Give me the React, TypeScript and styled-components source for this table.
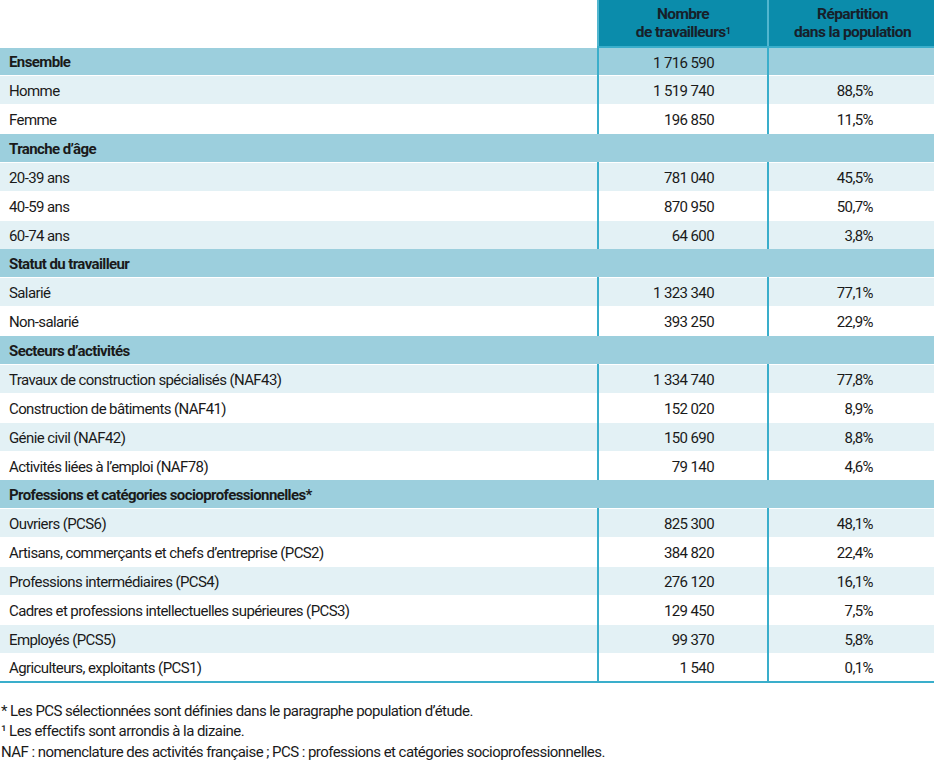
import React from "react";
import styled, { createGlobalStyle } from "styled-components";

const GlobalStyle = createGlobalStyle`
  html, body { margin: 0; padding: 0; background: #ffffff; }
  body {
    font-family: Roboto, "Liberation Sans", sans-serif;
    color: #1a1a1a;
  }
`;

const Page = styled.div`
  width: 934px;
  display: flex;
  flex-direction: column;
`;

const Table = styled.table`
  width: 934px;
  border-collapse: collapse;
  table-layout: fixed;
  font-size: 15px;
  letter-spacing: -0.6px;
`;

const HeadBlank = styled.th`
  width: 597px;
  padding: 0;
  background: #ffffff;
`;

const HeadCell = styled.th<{ $last?: boolean }>`
  width: ${(p) => (p.$last ? "167px" : "168px")};
  height: 46px;
  padding: 0;
  background: #0b8cab;
  color: #17202a;
  font-weight: 700;
  font-size: 15.5px;
  letter-spacing: -0.6px;
  line-height: 18px;
  text-align: center;
  vertical-align: middle;
  border-left: 2px solid #52b6cf;
  border-right: ${(p) => (p.$last ? "2px solid #52b6cf" : "none")};
  border-bottom: 2px solid #3aaecb;
`;

const Sup = styled.sup`
  font-size: 9px;
  vertical-align: top;
  position: relative;
  top: -1px;
`;

type Tone = "section" | "light" | "white";

const bg = (t: Tone) =>
  t === "section" ? "#9ccfdd" : t === "light" ? "#e3f1f5" : "#ffffff";

const Row = styled.tr<{ $tone: Tone }>`
  height: 28.86px;
  background: ${(p) => bg(p.$tone)};
`;

const LabelCell = styled.td<{ $bold?: boolean }>`
  padding: 2px 0 0 9px;
  font-weight: ${(p) => (p.$bold ? 700 : 400)};
  white-space: nowrap;
  vertical-align: middle;
  border-top: 1px solid #ffffff;
`;

const SectionCell = styled.td`
  padding: 2px 0 0 9px;
  font-weight: 700;
  white-space: nowrap;
  vertical-align: middle;
  border-right: 2px solid #3aaecb;
`;

const NumCell = styled.td<{ $pad: number; $last?: boolean }>`
  padding: 2px ${(p) => p.$pad}px 0 0;
  text-align: right;
  white-space: nowrap;
  vertical-align: middle;
  border-left: 2px solid #3aaecb;
  border-right: ${(p) => (p.$last ? "2px solid #3aaecb" : "none")};
  border-top: 1px solid #ffffff;
`;

const BottomRow = styled(Row)`
  & > td {
    border-bottom: 2px solid #3aaecb;
  }
`;

const Notes = styled.div`
  margin-top: 18px;
  padding-left: 1px;
  font-size: 15px;
  letter-spacing: -0.55px;
  line-height: 20.5px;
  display: flex;
  flex-direction: column;
`;

type Item =
  | { kind: "section"; label: string }
  | { kind: "row"; label: string; n: string; p: string; bold?: boolean; tone: Tone };

const data: Item[] = [
  { kind: "row", label: "Ensemble", n: "1 716 590", p: "", bold: true, tone: "section" },
  { kind: "row", label: "Homme", n: "1 519 740", p: "88,5%", tone: "light" },
  { kind: "row", label: "Femme", n: "196 850", p: "11,5%", tone: "white" },
  { kind: "section", label: "Tranche d’âge" },
  { kind: "row", label: "20-39 ans", n: "781 040", p: "45,5%", tone: "light" },
  { kind: "row", label: "40-59 ans", n: "870 950", p: "50,7%", tone: "white" },
  { kind: "row", label: "60-74 ans", n: "64 600", p: "3,8%", tone: "light" },
  { kind: "section", label: "Statut du travailleur" },
  { kind: "row", label: "Salarié", n: "1 323 340", p: "77,1%", tone: "light" },
  { kind: "row", label: "Non-salarié", n: "393 250", p: "22,9%", tone: "white" },
  { kind: "section", label: "Secteurs d’activités" },
  { kind: "row", label: "Travaux de construction spécialisés (NAF43)", n: "1 334 740", p: "77,8%", tone: "light" },
  { kind: "row", label: "Construction de bâtiments (NAF41)", n: "152 020", p: "8,9%", tone: "white" },
  { kind: "row", label: "Génie civil (NAF42)", n: "150 690", p: "8,8%", tone: "light" },
  { kind: "row", label: "Activités liées à l’emploi (NAF78)", n: "79 140", p: "4,6%", tone: "white" },
  { kind: "section", label: "Professions et catégories socioprofessionnelles*" },
  { kind: "row", label: "Ouvriers (PCS6)", n: "825 300", p: "48,1%", tone: "light" },
  { kind: "row", label: "Artisans, commerçants et chefs d’entreprise (PCS2)", n: "384 820", p: "22,4%", tone: "white" },
  { kind: "row", label: "Professions intermédiaires (PCS4)", n: "276 120", p: "16,1%", tone: "light" },
  { kind: "row", label: "Cadres et professions intellectuelles supérieures (PCS3)", n: "129 450", p: "7,5%", tone: "white" },
  { kind: "row", label: "Employés (PCS5)", n: "99 370", p: "5,8%", tone: "light" },
  { kind: "row", label: "Agriculteurs, exploitants (PCS1)", n: "1 540", p: "0,1%", tone: "white" },
];

export default function App() {
  return (
    <Page>
      <GlobalStyle />
      <Table>
        <thead>
          <tr>
            <HeadBlank />
            <HeadCell>
              Nombre
              <br />
              de travailleurs<Sup>1</Sup>
            </HeadCell>
            <HeadCell $last>
              Répartition
              <br />
              dans la population
            </HeadCell>
          </tr>
        </thead>
        <tbody>
          {data.map((it, i) => {
            if (it.kind === "section") {
              return (
                <Row key={i} $tone="section">
                  <SectionCell colSpan={3}>{it.label}</SectionCell>
                </Row>
              );
            }
            const RowComp = i === data.length - 1 ? BottomRow : Row;
            return (
              <RowComp key={i} $tone={it.tone}>
                <LabelCell $bold={it.bold}>{it.label}</LabelCell>
                <NumCell $pad={53}>{it.n}</NumCell>
                <NumCell $pad={63} $last>
                  {it.p}
                </NumCell>
              </RowComp>
            );
          })}
        </tbody>
      </Table>
      <Notes>
        <span>* Les PCS sélectionnées sont définies dans le paragraphe population d’étude.</span>
        <span>¹ Les effectifs sont arrondis à la dizaine.</span>
        <span>NAF : nomenclature des activités française ; PCS : professions et catégories socioprofessionnelles.</span>
      </Notes>
    </Page>
  );
}
